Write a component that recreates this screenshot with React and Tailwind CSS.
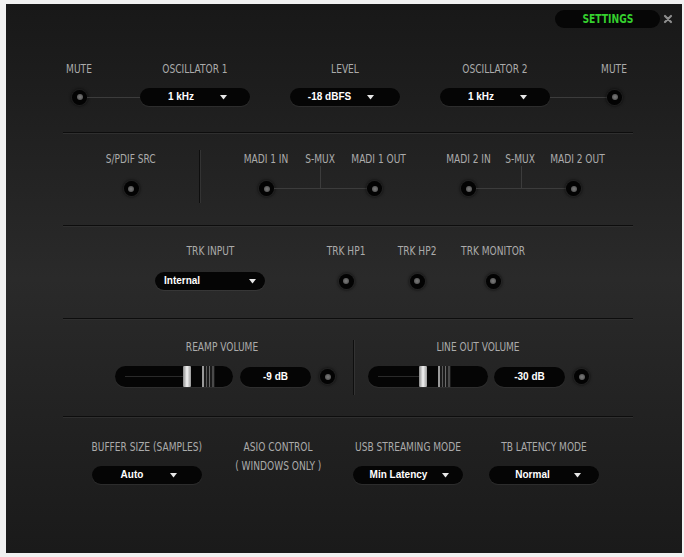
import React from "react";

const LBL =
  "text-[12px] leading-[12px] text-[#ababab] uppercase whitespace-nowrap scale-x-[0.84] font-['Liberation_Sans_Narrow','DejaVu_Sans_Condensed',sans-serif]";
const VAL =
  "text-[10px] leading-[12px] text-white font-bold whitespace-nowrap font-['Liberation_Sans','Arial',sans-serif]";

function Arrow() {
  return (
    <svg width="7" height="5" viewBox="0 0 7 5" className="shrink-0">
      <path d="M0 0 L7 0 L3.5 4.5 Z" fill="#e8e8e8" />
    </svg>
  );
}

function Dropdown({ text, pr = "pr-[23px]", w = "w-[110px]" }) {
  return (
    <div
      className={`flex items-center h-[18px] ${w} rounded-full bg-[#050505] shadow-[0_1px_1px_rgba(255,255,255,0.07)] pl-[2px] ${pr}`}
    >
      <span className={`flex-1 text-center ${VAL}`}>{text}</span>
      <Arrow />
    </div>
  );
}

function Led() {
  return (
    <div className="w-[15px] h-[15px] rounded-full bg-[#030303] flex items-center justify-center shrink-0 shadow-[0_0_0_1px_rgba(255,255,255,0.05),0_0_3px_1px_rgba(0,0,0,0.7)]">
      <div className="w-[6px] h-[6px] rounded-full bg-[radial-gradient(circle,#7a7a7a_0%,#4a4a4a_100%)]" />
    </div>
  );
}

function Sep() {
  return (
    <div className="ml-[57px] w-[570px]">
      <div className="h-px bg-[#0d0d0d]" />
      <div className="h-px bg-[#2f2f2f]" />
    </div>
  );
}

function VDiv({ h }) {
  return (
    <div className={`flex ${h}`}>
      <div className="w-px bg-[#0e0e0e]" />
      <div className="w-px bg-[#333333]" />
    </div>
  );
}

function Slider({ w, t1 }) {
  return (
    <div
      className={`flex items-center h-[21px] ${w} rounded-full bg-[#050505] shadow-[0_1px_1px_rgba(255,255,255,0.06)] pl-[10px]`}
    >
      <div className={`h-px ${t1} bg-[#2a2a2a]`} />
      <div className="w-[8px] h-[21px] rounded-[1px] bg-gradient-to-r from-[#8a8a8a] via-[#f4f4f4] to-[#9a9a9a]" />
      <div className="w-[11px] h-[21px]" />
      <div className="flex w-[13px] h-[21px] bg-[#1a1a1a]">
        <div className="w-[2px] bg-[#9a9a9a]" />
        <div className="w-[2px]" />
        <div className="w-[1px] bg-[#5a5a5a]" />
        <div className="w-[2px]" />
        <div className="w-[1px] bg-[#6a6a6a]" />
        <div className="w-[2px]" />
        <div className="w-[2px] bg-[#4a4a4a]" />
      </div>
    </div>
  );
}

function Display({ text }) {
  return (
    <div className="flex items-center justify-center h-[20px] w-[71px] rounded-full bg-[#050505] shadow-[0_1px_1px_rgba(255,255,255,0.06)]">
      <span className={VAL}>{text}</span>
    </div>
  );
}

export default function App() {
  return (
    <div className="w-[684px] h-[557px] bg-[#f1f1f1] pt-[4px] pl-[6px]">
      <div className="w-[676px] h-[549px] bg-gradient-to-b from-[#181818] via-[#2a2a2a] to-[#1a1a1a] flex flex-col">
        {/* header */}
        <div className="flex items-center h-[18px] mt-[6px]">
          <div className="ml-[549px] w-[105px] h-[18px] rounded-full bg-[#060606] flex items-center justify-center">
            <span className="text-[12px] leading-[12px] font-bold text-[#35d12e] scale-x-[0.85] font-['Liberation_Sans_Narrow','DejaVu_Sans_Condensed',sans-serif]">
              SETTINGS
            </span>
          </div>
          <svg width="10" height="10" viewBox="0 0 10 10" className="ml-[3px]">
            <path d="M2 2 L8 8 M8 2 L2 8" stroke="#8d8d8d" strokeWidth="2.2" strokeLinecap="round" />
          </svg>
        </div>

        {/* section 1 */}
        <div className="flex mt-[35px]">
          <div className={`ml-[43px] w-[60px] text-center ${LBL}`}>MUTE</div>
          <div className={`ml-[31px] w-[110px] text-center ${LBL}`}>OSCILLATOR 1</div>
          <div className={`ml-[40px] w-[110px] text-center ${LBL}`}>LEVEL</div>
          <div className={`ml-[40px] w-[110px] text-center ${LBL}`}>OSCILLATOR 2</div>
          <div className={`ml-[34px] w-[60px] text-center ${LBL}`}>MUTE</div>
        </div>
        <div className="flex items-center mt-[13px] h-[18px]">
          <div className="ml-[66px]">
            <Led />
          </div>
          <div className="w-[53px] h-px bg-[#3c3c3c]" />
          <Dropdown text="1 kHz" />
          <div className="ml-[40px]">
            <Dropdown text="-18 dBFS" pr="pr-[26px]" />
          </div>
          <div className="ml-[40px]">
            <Dropdown text="1 kHz" />
          </div>
          <div className="w-[57px] h-px bg-[#3c3c3c]" />
          <Led />
        </div>

        <div className="mt-[26px]">
          <Sep />
        </div>

        {/* section 2 */}
        <div className="flex items-start mt-[16px] h-[54px]">
          <div className="ml-[95px] w-[60px] flex flex-col items-center pt-[3px]">
            <div className={LBL}>S/PDIF SRC</div>
            <div className="mt-[16px]">
              <Led />
            </div>
          </div>
          <div className="ml-[38px]">
            <VDiv h="h-[53px]" />
          </div>
          {/* MADI 1 */}
          <div className="ml-[38px] w-[162px] relative pt-[3px]">
            <div className="flex">
              <div className={`w-[54px] text-center ${LBL}`}>MADI 1 IN</div>
              <div className={`w-[54px] text-center ${LBL}`}>S-MUX</div>
              <div className={`w-[54px] text-center ${LBL}`}>MADI 1 OUT</div>
            </div>
            <div className="flex items-center mt-[16px] ml-[20px]">
              <Led />
              <div className="w-[93px] h-px bg-[#3c3c3c]" />
              <Led />
            </div>
            <div className="absolute left-[81px] top-[16px] h-[23px] w-px bg-[#3c3c3c]" />
          </div>
          {/* MADI 2 */}
          <div className="ml-[41px] w-[156px] relative pt-[3px]">
            <div className="flex">
              <div className={`w-[52px] text-center ${LBL}`}>MADI 2 IN</div>
              <div className={`w-[52px] text-center ${LBL}`}>S-MUX</div>
              <div className={`w-[52px] text-center ${LBL}`}>MADI 2 OUT</div>
            </div>
            <div className="flex items-center mt-[16px] ml-[19px]">
              <Led />
              <div className="w-[90px] h-px bg-[#3c3c3c]" />
              <Led />
            </div>
            <div className="absolute left-[79px] top-[16px] h-[23px] w-px bg-[#3c3c3c]" />
          </div>
        </div>

        <div className="mt-[21px]">
          <Sep />
        </div>

        {/* section 3 */}
        <div className="flex items-start mt-[18px]">
          <div className="ml-[149px] w-[110px] flex flex-col items-center">
            <div className={LBL}>TRK INPUT</div>
            <div className="mt-[15px] flex items-center h-[18px] w-[110px] rounded-full bg-[#050505] shadow-[0_1px_1px_rgba(255,255,255,0.07)] pl-[9px] pr-[9px]">
              <span className={`flex-1 ${VAL}`}>Internal</span>
              <Arrow />
            </div>
          </div>
          <div className="ml-[56px] w-[50px] flex flex-col items-center">
            <div className={LBL}>TRK HP1</div>
            <div className="mt-[15px] h-[18px] flex items-center">
              <Led />
            </div>
          </div>
          <div className="ml-[21px] w-[50px] flex flex-col items-center">
            <div className={LBL}>TRK HP2</div>
            <div className="mt-[15px] h-[18px] flex items-center">
              <Led />
            </div>
          </div>
          <div className="ml-[16px] w-[70px] flex flex-col items-center">
            <div className={LBL}>TRK MONITOR</div>
            <div className="mt-[15px] h-[18px] flex items-center">
              <Led />
            </div>
          </div>
        </div>

        <div className="mt-[28px]">
          <Sep />
        </div>

        {/* section 4 */}
        <div className="flex items-start mt-[20px] h-[56px]">
          <div className="ml-[109px] flex flex-col pt-[1px]">
            <div className={`w-[214px] text-center ${LBL}`}>REAMP VOLUME</div>
            <div className="flex items-center mt-[13px]">
              <Slider w="w-[118px]" t1="w-[58px]" />
              <div className="ml-[7px]">
                <Display text="-9 dB" />
              </div>
              <div className="ml-[9px]">
                <Led />
              </div>
            </div>
          </div>
          <div className="ml-[18px]">
            <VDiv h="h-[55px]" />
          </div>
          <div className="ml-[13px] flex flex-col pt-[1px]">
            <div className={`w-[220px] text-center ${LBL}`}>LINE OUT VOLUME</div>
            <div className="flex items-center mt-[13px]">
              <Slider w="w-[120px]" t1="w-[41px]" />
              <div className="ml-[6px]">
                <Display text="-30 dB" />
              </div>
              <div className="ml-[9px]">
                <Led />
              </div>
            </div>
          </div>
        </div>

        <div className="mt-[20px]">
          <Sep />
        </div>

        {/* section 5 */}
        <div className="flex items-start mt-[23px]">
          <div className="ml-[81px] w-[120px] flex flex-col items-center">
            <div className={LBL}>BUFFER SIZE (SAMPLES)</div>
            <div className="mt-[13px]">
              <Dropdown text="Auto" pr="pr-[25px]" />
            </div>
          </div>
          <div className="ml-[21px] w-[100px] flex flex-col items-center">
            <div className={LBL}>ASIO CONTROL</div>
            <div className={`mt-[7px] ${LBL}`}>( WINDOWS ONLY )</div>
          </div>
          <div className="ml-[20px] w-[120px] flex flex-col items-center">
            <div className={LBL}>USB STREAMING MODE</div>
            <div className="mt-[13px]">
              <Dropdown text="Min Latency" pr="pr-[14px]" />
            </div>
          </div>
          <div className="ml-[16px] w-[120px] flex flex-col items-center">
            <div className={LBL}>TB LATENCY MODE</div>
            <div className="mt-[13px]">
              <Dropdown text="Normal" pr="pr-[18px]" />
            </div>
          </div>
        </div>
      </div>
    </div>
  );
}
